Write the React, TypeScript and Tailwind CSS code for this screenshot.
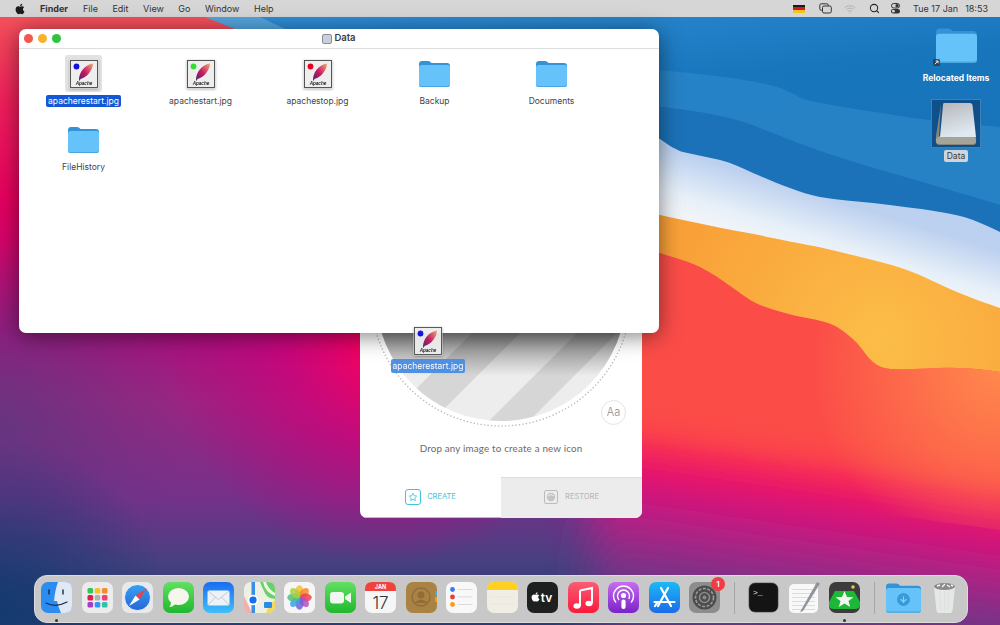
import React from 'react';
import { FaApple } from 'react-icons/fa';
import { Search, Wifi, ArrowDown } from 'lucide-react';

const redEdge =
  'M640 250 L660 253 C674 258 688 261 700 267 C712 273 722 280 733 288 C742 294 750 301 760 305 C775 311 791 315 807 318 C818 320 828 322 837 327 C845 332 851 337 857 343 C863 350 867 357 873 362 C879 367 886 369 893 369 C915 370 935 367 957 368 C971 368 986 370 1000 372 L1000 530 L640 480Z';

const Wallpaper = () => (
  <svg className="absolute inset-0" width="1000" height="625" viewBox="0 0 1000 625">
    <defs>
      <filter id="soft" x="-20%" y="-20%" width="140%" height="140%"><feGaussianBlur stdDeviation="22" /></filter>
      <linearGradient id="base" x1="0" y1="0" x2="0" y2="1">
        <stop offset="0.03" stopColor="#f4505a" />
        <stop offset="0.16" stopColor="#ef1f5a" />
        <stop offset="0.32" stopColor="#e6005f" />
        <stop offset="0.53" stopColor="#a8107e" />
        <stop offset="0.64" stopColor="#9a2580" />
        <stop offset="0.8" stopColor="#73328a" />
        <stop offset="0.9" stopColor="#47407f" />
        <stop offset="0.97" stopColor="#2a3c78" />
      </linearGradient>
      <radialGradient id="cornerNavy" gradientUnits="userSpaceOnUse" cx="0" cy="610" r="170">
        <stop offset="0" stopColor="#143a70" />
        <stop offset="1" stopColor="#143a70" stopOpacity="0" />
      </radialGradient>
      <radialGradient id="leftPurple" gradientUnits="userSpaceOnUse" cx="0" cy="430" r="190">
        <stop offset="0" stopColor="#5c3880" stopOpacity="0.8" />
        <stop offset="1" stopColor="#5c3880" stopOpacity="0" />
      </radialGradient>
      <radialGradient id="hotPink" gradientUnits="userSpaceOnUse" cx="385" cy="345" r="220">
        <stop offset="0" stopColor="#ff0058" />
        <stop offset="0.45" stopColor="#d4007a" stopOpacity="0.7" />
        <stop offset="1" stopColor="#c0007f" stopOpacity="0" />
      </radialGradient>
      <linearGradient id="lowerRight" gradientUnits="userSpaceOnUse" x1="700" y1="380" x2="668" y2="600">
        <stop offset="0.26" stopColor="#fa4848" />
        <stop offset="0.36" stopColor="#ff0a50" />
        <stop offset="0.48" stopColor="#d8087a" />
        <stop offset="0.65" stopColor="#b82084" />
        <stop offset="0.85" stopColor="#7f2f88" />
        <stop offset="1" stopColor="#5a3a85" />
      </linearGradient>
      <linearGradient id="blue" x1="0" y1="0" x2="0.3" y2="1">
        <stop offset="0" stopColor="#2f8dd6" />
        <stop offset="0.35" stopColor="#1876bd" />
        <stop offset="1" stopColor="#1670b6" />
      </linearGradient>
      <linearGradient id="white" gradientUnits="userSpaceOnUse" x1="820" y1="195" x2="803" y2="250">
        <stop offset="0" stopColor="#bcd0ef" />
        <stop offset="0.7" stopColor="#e6eff8" />
        <stop offset="1" stopColor="#f0f4f8" />
      </linearGradient>
      <radialGradient id="orange" gradientUnits="userSpaceOnUse" cx="880" cy="340" r="220">
        <stop offset="0" stopColor="#fcbd48" />
        <stop offset="1" stopColor="#f9a038" />
      </radialGradient>
      <linearGradient id="red" gradientUnits="userSpaceOnUse" x1="700" y1="412" x2="694" y2="452">
        <stop offset="0" stopColor="#fb4c48" />
        <stop offset="1" stopColor="#fb4c48" stopOpacity="0" />
      </linearGradient>
      <radialGradient id="redGlow" gradientUnits="userSpaceOnUse" cx="1000" cy="365" r="190">
        <stop offset="0" stopColor="#ff8a4c" />
        <stop offset="1" stopColor="#ff8a4c" stopOpacity="0" />
      </radialGradient>
    </defs>
    <rect width="1000" height="625" fill="url(#base)" />
    <rect width="400" height="625" fill="url(#leftPurple)" />
    <rect width="400" height="625" fill="url(#cornerNavy)" />
    <rect x="60" y="40" width="660" height="600" fill="url(#hotPink)" />
    <rect x="590" y="250" width="500" height="460" fill="url(#lowerRight)" filter="url(#soft)" />
    <path d="M205 17 L235 29 L660 240 L660 17Z" fill="#54a6de" />
    <path d="M260 17 L1000 17 L1000 320 L640 320 L640 200Z" fill="url(#blue)" />
    <path d="M660 70 C700 74 740 78 770 85 C790 90 795 96 807 100 C840 108 880 112 907 117 C940 122 970 124 1000 127 L1000 205 C950 190 900 176 857 163 C820 152 790 140 757 127 C730 116 690 110 660 107Z" fill="#2a86c8" opacity="0.8" />
    <path d="M660 107 C690 110 730 116 757 127 C790 140 820 152 857 163 C900 176 950 190 1000 205 L1000 260 L660 170Z" fill="#1c72b8" />
    <path d="M640 128 L660 139 C670 146 676 150 683 152 C695 155 708 157 720 160 C732 163 742 168 753 173 C765 178 778 184 790 188 C800 192 810 195 820 197 C838 200 855 201 873 203 C895 206 918 208 940 212 C952 214 962 216 973 220 C983 224 992 228 1000 232 L1000 340 L640 300Z" fill="url(#white)" />
    <path d="M640 212 L660 215 C675 218 691 222 707 225 C729 230 751 233 773 238 C795 243 818 246 840 252 C863 258 885 262 907 270 C924 276 940 285 957 292 C971 298 986 303 1000 308 L1000 400 L640 340Z" fill="url(#orange)" />
    <path d={redEdge} fill="url(#red)" />
    <path d={redEdge} fill="url(#redGlow)" />
  </svg>
);

const MenuBar = () => (
  <div className="absolute top-0 left-0 w-full h-[17px] bg-[#d6d6d6] flex items-center justify-between text-[9px] text-[#333] pl-[14px] pr-[12px]">
    <div className="flex items-center">
      <FaApple className="w-[12px] h-[12px] text-[#1c1c1c] mr-[14px]" />
      <div className="flex items-center gap-[14.5px]">
        <span className="font-bold mr-[0.5px]">Finder</span>
        <span>File</span>
        <span>Edit</span>
        <span>View</span>
        <span>Go</span>
        <span>Window</span>
        <span>Help</span>
      </div>
    </div>
    <div className="flex items-center">
      <div className="w-[12px] h-[8px] flex flex-col mr-[14px]">
        <div className="flex-1 bg-[#1a1a1a]" />
        <div className="flex-1 bg-[#d8161c]" />
        <div className="flex-1 bg-[#f6c51c]" />
      </div>
      <svg width="13" height="11" viewBox="0 0 13 11" fill="none" stroke="#333" strokeWidth="1" className="mr-[12px]">
        <rect x="0.8" y="0.8" width="8.5" height="6.5" rx="1.5" />
        <rect x="3.5" y="3" width="8.8" height="7" rx="1.5" fill="#d6d6d6" />
      </svg>
      <Wifi className="w-[12px] h-[12px] text-[#a8a8a8] mr-[13px]" strokeWidth={1.5} />
      <Search className="w-[11px] h-[11px] text-[#222] mr-[10px]" strokeWidth={2.2} />
      <svg width="11" height="11" viewBox="0 0 11 11" className="mr-[12px]">
        <rect x="1.5" y="0.5" width="8" height="4.5" rx="2.2" fill="none" stroke="#333" />
        <circle cx="7" cy="2.7" r="1.6" fill="#333" />
        <rect x="1" y="6" width="9" height="4.5" rx="2.2" fill="#333" />
        <circle cx="3.4" cy="8.2" r="1.4" fill="#d6d6d6" />
      </svg>
      <span className="mr-[7px] whitespace-nowrap">Tue 17 Jan</span>
      <span>18:53</span>
    </div>
  </div>
);

const FolderIcon = ({ className = 'w-[31px] h-[27px]' }: { className?: string }) => (
  <svg className={className} viewBox="0 0 31 27">
    <path d="M0 4 Q0 1 3 1 H9 Q11 1 12.5 3 H28 Q31 3 31 6 V12 H0Z" fill="#3493d6" />
    <rect x="0" y="5" width="31" height="22" rx="2.5" fill="#66c3fa" />
    <path d="M0 24.5 V24 Q0 26 2.5 26 H28.5 Q31 26 31 24 V24.5 Q31 27 28.5 27 H2.5 Q0 27 0 24.5Z" fill="#4aa6e0" />
  </svg>
);

const ApacheIcon = ({ dot }: { dot: string }) => (
  <svg className="w-[30px] h-[30px] drop-shadow-[0_1px_1px_rgba(0,0,0,0.3)]" viewBox="0 0 30 30">
    <defs>
      <linearGradient id={`quill${dot.slice(1)}`} x1="0" y1="1" x2="1" y2="0">
        <stop offset="0" stopColor="#3a2a70" />
        <stop offset="0.45" stopColor="#c81860" />
        <stop offset="1" stopColor="#f0a878" />
      </linearGradient>
    </defs>
    <rect x="0.5" y="0.5" width="29" height="29" fill="#eeeeee" />
    <rect x="1.5" y="1.5" width="27" height="27" fill="none" stroke="#444" strokeWidth="0.9" />
    <circle cx="7.5" cy="7.5" r="2.9" fill={dot} />
    <path d="M10 21 C10 14 15 6 24 4.5 C24 10 19 18 11.5 20 L10.5 22Z" fill={`url(#quill${dot.slice(1)})`} />
    <text x="15" y="26.3" textAnchor="middle" fontSize="4.6" fontWeight="700" fontStyle="italic" fill="#222" fontFamily="Liberation Sans, sans-serif">Apache</text>
  </svg>
);

const finderItems = [
  { name: 'apacherestart.jpg', dot: '#1010e0', selected: true },
  { name: 'apachestart.jpg', dot: '#30e030' },
  { name: 'apachestop.jpg', dot: '#e80020' },
  { name: 'Backup' },
  { name: 'Documents' },
  { name: 'FileHistory' },
];

const FinderWindow = () => (
  <div className="absolute left-[19px] top-[29px] w-[640px] h-[304px] bg-white rounded-[7px] overflow-hidden shadow-[0_3px_22px_rgba(0,0,0,0.5)]">
    <div className="relative h-[20px] border-b border-[#dedede] flex items-center justify-center gap-[2px]">
      <div className="absolute left-[5px] top-[5px] flex gap-[5px]">
        <div className="w-[9px] h-[9px] rounded-full bg-[#f4564e]" />
        <div className="w-[9px] h-[9px] rounded-full bg-[#f8b32e]" />
        <div className="w-[9px] h-[9px] rounded-full bg-[#2fc440]" />
      </div>
      <div className="w-[10px] h-[10px] rounded-[2px] bg-[#c8d0da] border border-[#8a8f96]" />
      <span className="text-[9.5px] font-semibold text-[#3c3c3c]">Data</span>
    </div>
    <div className="grid grid-cols-[repeat(5,117px)] auto-rows-[65.5px] pl-[6px] pt-[6px]">
      {finderItems.map((item) => (
        <div key={item.name} className="flex flex-col items-center">
          <div className={`w-[37px] h-[37px] rounded-[3px] flex items-center justify-center ${item.selected ? 'bg-[#e2e2e2]' : ''}`}>
            {item.dot ? <ApacheIcon dot={item.dot} /> : <FolderIcon />}
          </div>
          <span className={`mt-[3px] px-[2px] h-[12px] leading-[12px] text-[8.5px] rounded-[2px] ${item.selected ? 'bg-[#1257d6] text-white' : 'text-[#444]'}`}>
            {item.name}
          </span>
        </div>
      ))}
    </div>
  </div>
);

const DropCircle = () => (
  <svg className="absolute left-[9px] top-[14px]" width="264" height="264" viewBox="0 0 264 264">
    <defs>
      <clipPath id="disc"><circle cx="132" cy="132" r="125" /></clipPath>
      <linearGradient id="fade" gradientUnits="userSpaceOnUse" x1="0" y1="169" x2="0" y2="212">
        <stop offset="0" stopColor="#000" stopOpacity="0.42" />
        <stop offset="1" stopColor="#000" stopOpacity="0" />
      </linearGradient>
    </defs>
    <g clipPath="url(#disc)">
      <rect width="264" height="264" fill="#ededed" />
      <path d="M103 169 L151 169 L31 289 L-17 289Z" fill="#d6d6d6" />
      <path d="M208 169 L248 169 L128 289 L88 289Z" fill="#d6d6d6" />
      <rect width="264" height="264" fill="url(#fade)" />
    </g>
    <circle cx="132" cy="132" r="130" fill="none" stroke="#bdbdbd" strokeWidth="1.5" strokeDasharray="0.1 3.4" strokeLinecap="round" />
  </svg>
);

const AppWindow = () => (
  <div className="absolute left-[360px] top-[150px] w-[282px] h-[368px] bg-white rounded-[7px] overflow-hidden flex flex-col justify-end">
    <DropCircle />
    <div className="absolute left-[241px] top-[250px] w-[25px] h-[25px] rounded-full border border-[#e4e4e4] bg-white flex items-center justify-center text-[11px] font-light text-[#8c8c8c]">Aa</div>
    <div className="h-[56px] flex items-center justify-center pb-[2px] text-[#6a6a6a] font-['Lato',sans-serif]">
      <span className="text-[9.8px] tracking-[0.18px]">Drop any image to create a new icon</span>
    </div>
    <div className="flex h-[41px] text-[7.5px]">
      <div className="flex-1 flex items-center justify-center gap-[6px] border-b border-[#7fd3ea] text-[#3fc3de] pb-[1px]">
        <div className="w-[16px] h-[16px] rounded-[3px] border border-[#3fc3de] flex items-center justify-center">
          <svg width="10" height="10" viewBox="0 0 24 24" fill="none" stroke="#3fc3de" strokeWidth="2"><path d="M12 3l2.8 5.8 6.2.9-4.5 4.4 1.1 6.3L12 17.4 6.4 20.4l1.1-6.3L3 9.7l6.2-.9z" /></svg>
        </div>
        <span>CREATE</span>
      </div>
      <div className="w-[141px] flex items-center justify-center gap-[7px] bg-[#ececec] border-t border-[#dcdcdc] text-[#b4b4b4] pb-[2px]">
        <div className="w-[14px] h-[14px] rounded-[2px] border border-[#bdbdbd] flex items-center justify-center">
          <svg width="10" height="10" viewBox="0 0 10 10">
            <circle cx="5" cy="5" r="4.2" fill="#c4c4c4" />
            <path d="M2 4 Q5 1 8 4" stroke="#ececec" strokeWidth="1" fill="none" />
          </svg>
        </div>
        <span>RESTORE</span>
      </div>
    </div>
  </div>
);

const DesktopIcons = () => (
  <>
    <div className="absolute left-[916px] top-[27px] w-[80px] flex flex-col items-center">
      <div className="relative h-[37px]">
        <FolderIcon className="w-[41px] h-[36px]" />
        <svg className="absolute left-[-3px] bottom-[-2px]" width="7" height="7" viewBox="0 0 8 8">
          <rect width="8" height="8" rx="1.5" fill="#333" opacity="0.75" />
          <path d="M2 6 L5.5 2.5 M3 2.3 H5.7 V5" stroke="#fff" strokeWidth="1" fill="none" />
        </svg>
      </div>
      <span className="mt-[8px] text-[8.5px] leading-[12px] font-bold text-white whitespace-nowrap">Relocated Items</span>
    </div>
    <div className="absolute left-[916px] top-[99px] w-[80px] flex flex-col items-center">
      <div className="w-[50px] h-[49px] bg-[#10508a] border border-[#3f81b4] flex items-center justify-center">
        <svg width="42" height="44" viewBox="0 0 42 44">
          <defs>
            <linearGradient id="disk" x1="0" y1="0" x2="0.3" y2="1">
              <stop offset="0" stopColor="#b6b6ba" />
              <stop offset="1" stopColor="#dfe9f2" />
            </linearGradient>
          </defs>
          <path d="M6 2 L1 34 Q0 43 4 43 H38 Q42 43 41 37 V34 H4Z" fill="#85857c" />
          <path d="M9 1 H35 Q37 1 37.5 3 L41 35 H5 L8 3 Q8 1 9 1Z" fill="url(#disk)" />
          <rect x="1" y="35" width="40" height="7" rx="3" fill="#a4a498" />
        </svg>
      </div>
      <span className="mt-[2px] px-[3px] h-[12px] leading-[12px] text-[8.5px] rounded-[2px] bg-[#cfd5da] text-[#3a3a3a]">Data</span>
    </div>
  </>
);

const DraggedFile = () => (
  <div className="absolute left-[380px] top-[326px] w-[96px] flex flex-col items-center opacity-95">
    <ApacheIcon dot="#1010e0" />
    <span className="mt-[3px] px-[2px] h-[14px] leading-[14px] text-[8.5px] rounded-[2px] bg-[#4a8de2] text-white">apacherestart.jpg</span>
  </div>
);

// dock artwork, all on a 31x31 box
const Art = ({ children, bg }: { children?: React.ReactNode; bg?: string }) => (
  <svg width="31" height="31" viewBox="0 0 31 31">
    {bg && <rect width="31" height="31" rx="7" fill={bg} />}
    {children}
  </svg>
);

const dockGradients = (
  <svg width="0" height="0" className="absolute">
    <defs>
      <linearGradient id="gGreen" x1="0" y1="0" x2="0" y2="1"><stop offset="0" stopColor="#62df62" /><stop offset="1" stopColor="#20b82e" /></linearGradient>
      <linearGradient id="gMail" x1="0" y1="0" x2="0" y2="1"><stop offset="0" stopColor="#1a6cf0" /><stop offset="1" stopColor="#3ec0fb" /></linearGradient>
      <linearGradient id="gMusic" x1="0" y1="0" x2="0" y2="1"><stop offset="0" stopColor="#fb5c74" /><stop offset="1" stopColor="#fa1a3c" /></linearGradient>
      <linearGradient id="gPod" x1="0" y1="0" x2="0" y2="1"><stop offset="0" stopColor="#c86cf0" /><stop offset="1" stopColor="#7a22c8" /></linearGradient>
      <linearGradient id="gStore" x1="0" y1="0" x2="0" y2="1"><stop offset="0" stopColor="#1cb8f8" /><stop offset="1" stopColor="#1a6ce8" /></linearGradient>
      <linearGradient id="gSafari" x1="0" y1="0" x2="0" y2="1"><stop offset="0" stopColor="#3aa0f0" /><stop offset="1" stopColor="#2468d8" /></linearGradient>
    </defs>
  </svg>
);

const dockApps: { name: string; art: React.ReactNode; dot?: boolean }[] = [
  {
    name: 'Finder',
    dot: true,
    art: (
      <Art bg="#2b8cf2">
        <path d="M17 0 H24 Q31 0 31 7 V24 Q31 31 24 31 H20 Q17 24 16 19 H13 Q14 8 17 0Z" fill="#dfe9f5" />
        <path d="M8 8 V12 M22 8 V12" stroke="#1a2a44" strokeWidth="1.4" strokeLinecap="round" />
        <path d="M5 21 Q15 26 26 20" stroke="#1a2a44" strokeWidth="1.2" fill="none" strokeLinecap="round" />
      </Art>
    ),
  },
  {
    name: 'Launchpad',
    art: (
      <Art bg="#ececec">
        {['#35c45a', '#f8c02c', '#f58a2c', '#df1f4a', '#b2b2b2', '#ee3f7a', '#a53ccc', '#2e9af0', '#2cc5a8'].map((c, i) => (
          <rect key={c} x={5.5 + (i % 3) * 7.2} y={6 + Math.floor(i / 3) * 7} width="5.6" height="5.4" rx="1.5" fill={c} />
        ))}
      </Art>
    ),
  },
  {
    name: 'Safari',
    art: (
      <Art bg="#e9e9e9">
        <circle cx="15.5" cy="15.5" r="13" fill="url(#gSafari)" stroke="#fff" strokeWidth="0.8" />
        <path d="M24 7 L13.5 13.5 L17.5 17.5Z" fill="#f04040" />
        <path d="M7 24 L13.5 13.5 L17.5 17.5Z" fill="#fff" />
      </Art>
    ),
  },
  {
    name: 'Messages',
    art: (
      <Art bg="url(#gGreen)">
        <ellipse cx="15.5" cy="14.5" rx="10.5" ry="8.6" fill="#f6f6ee" />
        <path d="M8 19 Q8 24 6 25 Q10 25 12 22Z" fill="#f6f6ee" />
      </Art>
    ),
  },
  {
    name: 'Mail',
    art: (
      <Art bg="url(#gMail)">
        <rect x="4.5" y="8.5" width="22" height="15" rx="1.5" fill="#eef2f6" />
        <path d="M5 9 L15.5 17.5 L26 9 M5 23 L12.5 15 M26 23 L18.5 15" stroke="#b4c0cc" strokeWidth="0.8" fill="none" />
      </Art>
    ),
  },
  {
    name: 'Maps',
    art: (
      <Art bg="#eef0e4">
        <path d="M16 0 H24 Q31 0 31 7 V17 Q22 16 20 9 Q18 5 16 0Z" fill="#6ad06a" />
        <path d="M19 0 H22 Q24 7 31 11 V14 Q21 10 19 0Z" fill="#f2f4e8" />
        <path d="M22 31 H24 Q31 31 31 24 V18 Q25 22 22 31Z" fill="#f2d860" />
        <path d="M0 14 L8 31 H5 Q0 31 0 26Z" fill="#f0b0b0" />
        <rect x="7.5" y="0" width="3.5" height="31" fill="#3a8ee8" />
        <circle cx="9" cy="18" r="4.4" fill="#1a6cf0" stroke="#fff" strokeWidth="1.6" />
        <rect x="20" y="20" width="8" height="6" rx="1" fill="#2a8ce8" />
      </Art>
    ),
  },
  {
    name: 'Photos',
    art: (
      <Art bg="#f6f6f6">
        {['#f8c030', '#f58a30', '#ec4050', '#b84fc0', '#7060d8', '#3ea0e8', '#50c080', '#a8d040'].map((c, i) => (
          <ellipse key={c} cx="15.5" cy="9.5" rx="4" ry="6.2" fill={c} opacity="0.85" transform={`rotate(${i * 45} 15.5 15.5)`} />
        ))}
      </Art>
    ),
  },
  {
    name: 'FaceTime',
    art: (
      <Art bg="url(#gGreen)">
        <rect x="5" y="10" width="14" height="11.5" rx="3" fill="#f0f6f0" />
        <path d="M20 14.5 L26 10.5 V21 L20 17Z" fill="#f0f6f0" />
      </Art>
    ),
  },
  {
    name: 'Calendar',
    art: (
      <Art bg="#f6f6f6">
        <path d="M0 9 V7 Q0 0 7 0 H24 Q31 0 31 7 V9Z" fill="#f0433c" />
        <text x="15.5" y="7" textAnchor="middle" fontSize="5.5" fontWeight="700" fill="#fff" fontFamily="Inter, sans-serif">JAN</text>
        <text x="15.5" y="26.5" textAnchor="middle" fontSize="17" fontWeight="300" fill="#333" fontFamily="Inter, sans-serif">17</text>
      </Art>
    ),
  },
  {
    name: 'Contacts',
    art: (
      <Art bg="#a98244">
        <rect x="29" y="9" width="2" height="5" fill="#4aa6e0" />
        <rect x="29" y="15" width="2" height="5" fill="#e0a030" />
        <circle cx="15" cy="15" r="9" fill="none" stroke="#8f6c38" strokeWidth="1.4" />
        <circle cx="15" cy="13" r="3.4" fill="#8f6c38" />
        <path d="M8.5 21 Q15 14 21.5 21" fill="#8f6c38" />
      </Art>
    ),
  },
  {
    name: 'Reminders',
    art: (
      <Art bg="#f8f8f8">
        {['#2f7cf0', '#ee3b30', '#f59a22'].map((c, i) => (
          <g key={c}>
            <circle cx="6.5" cy={7.5 + i * 7.5} r="2.4" fill={c} />
            <rect x="11.5" y={7 + i * 7.5} width="15" height="0.8" fill="#d4d4d4" />
          </g>
        ))}
      </Art>
    ),
  },
  {
    name: 'Notes',
    art: (
      <Art bg="#f0ede4">
        <path d="M0 8 V7 Q0 0 7 0 H24 Q31 0 31 7 V8Z" fill="#fdd022" />
        <path d="M3 15 H28 M3 22 H28" stroke="#e6e2d8" strokeWidth="0.6" />
      </Art>
    ),
  },
  {
    name: 'TV',
    art: (
      <Art bg="#1e2020">
        <g transform="translate(4.5 9.5) scale(0.021)" fill="#fff">
          <path d="M318.7 268.7c-.2-36.7 16.4-64.4 50-84.8-18.8-26.9-47.2-41.7-84.7-44.6-35.5-2.8-74.3 20.7-88.5 20.7-15 0-49.4-19.7-76.4-19.7C63.3 141.2 4 184.8 4 273.5q0 39.3 14.4 81.2c12.8 36.7 59 126.7 107.2 125.2 25.2-.6 43-17.9 75.8-17.9 31.8 0 48.3 17.9 76.4 17.9 48.6-.7 90.4-82.5 102.6-119.3-65.2-30.7-61.7-90-61.7-91.9zm-56.6-164.2c27.3-32.4 24.8-61.9 24-72.5-24.1 1.4-52 16.4-67.9 34.9-17.5 19.8-27.8 44.3-25.6 71.9 26.1 2 49.9-11.4 69.5-34.3z" />
        </g>
        <text x="19.5" y="20" textAnchor="middle" fontSize="12" fontWeight="600" fill="#fff" fontFamily="Inter, sans-serif">tv</text>
      </Art>
    ),
  },
  {
    name: 'Music',
    art: (
      <Art bg="url(#gMusic)">
        <path d="M12 8.5 L24 6 V21 M12 8.5 V24" stroke="#fff" strokeWidth="2" fill="none" />
        <ellipse cx="9" cy="24" rx="3.6" ry="2.8" fill="#fff" />
        <ellipse cx="21" cy="21.5" rx="3.6" ry="2.8" fill="#fff" />
      </Art>
    ),
  },
  {
    name: 'Podcasts',
    art: (
      <Art bg="url(#gPod)">
        <circle cx="15.5" cy="14" r="10" fill="none" stroke="#fff" strokeWidth="1.4" strokeDasharray="46 17" strokeDashoffset="-24" />
        <circle cx="15.5" cy="14" r="6" fill="none" stroke="#fff" strokeWidth="1.4" strokeDasharray="27 11" strokeDashoffset="-14" />
        <circle cx="15.5" cy="13.5" r="2.6" fill="#fff" />
        <rect x="13.4" y="17.5" width="4.2" height="9.5" rx="2" fill="#fff" />
      </Art>
    ),
  },
  {
    name: 'App Store',
    art: (
      <Art bg="url(#gStore)">
        <path d="M19 6 L9 24 M12 6 L22 24 M5.5 20 H25.5 M6 24 L8 21" stroke="#fff" strokeWidth="2.2" strokeLinecap="round" fill="none" />
      </Art>
    ),
  },
  {
    name: 'System Preferences',
    art: (
      <div className="relative w-[31px] h-[31px]">
        <Art bg="#8d8d8d">
          <circle cx="15.5" cy="15.5" r="12" fill="#4c4c4c" />
          <circle cx="15.5" cy="15.5" r="9" fill="none" stroke="#9a9a9a" strokeWidth="1.6" strokeDasharray="3 1.5" />
          <circle cx="15.5" cy="15.5" r="5" fill="none" stroke="#8a8a8a" strokeWidth="1.6" />
          <circle cx="15.5" cy="15.5" r="2" fill="#8a8a8a" />
        </Art>
        <div className="absolute right-[-5px] top-[-5px] w-[14px] h-[14px] rounded-full bg-[#f23c44] text-white text-[8px] font-semibold flex items-center justify-center">1</div>
      </div>
    ),
  },
  { name: 'sep1', art: null },
  {
    name: 'Terminal',
    art: (
      <Art>
        <rect x="1" y="1" width="29" height="29" rx="6" fill="#141414" stroke="#3a3a3a" strokeWidth="0.6" />
        <text x="5" y="13" fontSize="8" fill="#e8e8e8" fontFamily="Liberation Mono, monospace">&gt;_</text>
      </Art>
    ),
  },
  {
    name: 'TextEdit',
    art: (
      <Art>
        <rect x="0" y="2" width="29" height="29" rx="5" fill="#f8f8f8" />
        {[7, 11, 15, 19, 23, 27].map((y) => (
          <rect key={y} x="3" y={y} width="23" height="0.5" fill="#b8c0cc" />
        ))}
        <path d="M28 0 L31 1.5 L14 29 L11 30Z" fill="#8c949c" />
      </Art>
    ),
  },
  {
    name: 'Image2icon',
    dot: true,
    art: (
      <Art bg="#3c3c3c">
        <circle cx="24" cy="5" r="1.8" fill="#e8c840" />
        <path d="M6 9 H25 L31 20 V23 Q31 27 26 27 H5 Q0 27 0 23 V20Z" fill="#1eb838" />
        <path d="M15.5 9 L18 15 L24.5 15.3 L19.5 19 L21.2 25 L15.5 21.6 L9.8 25 L11.5 19 L6.5 15.3 L13 15Z" fill="#f2f8f0" />
      </Art>
    ),
  },
  { name: 'sep2', art: null },
  {
    name: 'Downloads',
    art: (
      <div className="relative">
        <FolderIcon className="w-[35px] h-[31px]" />
        <div className="absolute left-[11px] top-[11px] w-[13px] h-[13px] rounded-full bg-[#3a9ad8] flex items-center justify-center">
          <ArrowDown className="w-[9px] h-[9px] text-[#8fd2f8]" strokeWidth={3} />
        </div>
      </div>
    ),
  },
  {
    name: 'Trash',
    art: (
      <Art>
        <path d="M5 5 H26 L23.5 29 Q23 31 21 31 H10 Q8 31 7.5 29Z" fill="#e6e8e8" />
        <ellipse cx="15.5" cy="4.5" rx="10.5" ry="3.5" fill="#8a8a8a" />
        <path d="M8 4 L11 3 M13 5 L16 2 M18 3 L21 5 M22 3 L24 4" stroke="#f4f4f4" strokeWidth="1.4" />
        <path d="M11 9 L12 28 M15.5 9 V28 M20 9 L19 28" stroke="#d8dada" strokeWidth="0.6" />
      </Art>
    ),
  },
];

const Dock = () => (
  <div className="absolute left-[34px] top-[575px] w-[934px] h-[48px] rounded-[13px] bg-[#c8c8c8] border border-[#dcdcdc] flex items-start pl-[6px] pt-[6px] gap-[9.5px]">
    {dockGradients}
    {dockApps.map((app) =>
      app.art === null ? (
        <div key={app.name} className="w-[1px] h-[32px] mx-[4px] bg-[#a6a6a6]" />
      ) : (
        <div key={app.name} className="relative w-[31px] h-[31px] flex items-center justify-center shrink-0">
          {app.art}
          {app.dot && <div className="absolute left-[14px] top-[37px] w-[3px] h-[3px] rounded-full bg-[#333]" />}
        </div>
      ),
    )}
  </div>
);

const App = () => {
  return (
    <main className="relative w-[1000px] h-[625px] overflow-hidden font-['Inter',sans-serif]">
      <Wallpaper />
      <MenuBar />
      <DesktopIcons />
      <AppWindow />
      <FinderWindow />
      <DraggedFile />
      <Dock />
    </main>
  );
};

export default App;
